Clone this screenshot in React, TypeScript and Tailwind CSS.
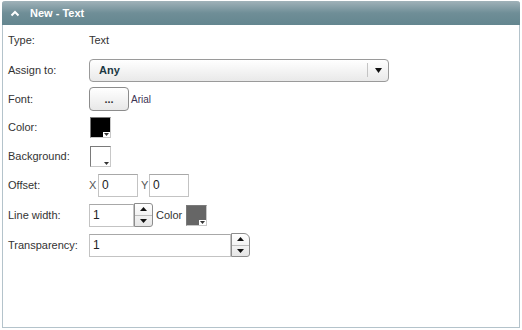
import React from "react";

const Label = ({ children }: { children: React.ReactNode }) => (
  <div className="w-[86px] shrink-0 pl-[5px] text-[11px] text-[#333]">{children}</div>
);

const Row = ({ h, label, children }: { h: string; label: string; children?: React.ReactNode }) => (
  <div className={`flex items-center ${h}`}>
    <Label>{label}</Label>
    {children}
  </div>
);

const Swatch = ({ color }: { color: string }) => (
  <div className="relative h-[21px] w-[21px] border border-t-[#7a7a7a] border-l-[#7a7a7a] border-r-[#c8c8c8] border-b-[#c8c8c8]" style={{ background: color }}>
    <div className="absolute right-0 bottom-0 flex h-[5px] w-[7px] items-center justify-center bg-white">
      <svg width="5" height="3" viewBox="0 0 5 3">
        <path d="M0 0h5L2.5 3z" fill="#333" />
      </svg>
    </div>
  </div>
);

const Spinner = ({ big }: { big?: boolean }) => (
  <div
    className={`flex h-[24px] w-[19px] flex-col border border-[#8d8d8d] bg-gradient-to-b from-white to-[#e6e6e6] ${
      big ? "rounded-tr-[6px] rounded-br-[3px]" : "rounded-r-[3px]"
    }`}
  >
    <div className="flex flex-1 items-center justify-center border-b border-[#bdbdbd]">
      <svg width="7" height="4" viewBox="0 0 7 4">
        <path d="M0 4h7L3.5 0z" fill="#111" />
      </svg>
    </div>
    <div className="flex flex-1 items-center justify-center">
      <svg width="7" height="4" viewBox="0 0 7 4">
        <path d="M0 0h7L3.5 4z" fill="#111" />
      </svg>
    </div>
  </div>
);

const Input = ({ w, value }: { w: string; value: string }) => (
  <div className={`flex h-[23px] ${w} items-center border border-[#c3c3c3] border-t-[#a8a8a8] bg-white pl-[3px] text-[12px] text-[#222]`}>
    {value}
  </div>
);

export default function App() {
  return (
    <div className="h-[330px] w-[522px] bg-white pt-[1px] pl-[2px] font-['Liberation_Sans',Arial,sans-serif]">
      <div className="flex h-[327px] w-[518px] flex-col rounded-t-[3px] border border-t-0 border-[#b4c3cb]">
        <div className="-mx-[1px] flex h-[24px] items-center gap-[10px] rounded-t-[3px] bg-gradient-to-b from-[#a0b2b9] via-[#6f8e97] to-[#64868f] pl-[8px]">
          <svg width="10" height="7" viewBox="0 0 10 7">
            <path d="M1.5 5.5L5 2l3.5 3.5" stroke="#fff" strokeWidth="2" fill="none" />
          </svg>
          <span className="text-[11px] font-bold text-white">New - Text</span>
        </div>

        <div className="flex flex-col pt-[1px]">
          <Row h="h-[29px]" label="Type:">
            <span className="text-[11px] text-[#333]">Text</span>
          </Row>
          <Row h="h-[30px]" label="Assign to:">
            <div className="flex h-[23px] w-[300px] items-center rounded-[4px] border border-[#9a9a9a] bg-gradient-to-b from-white to-[#e9e9e9]">
              <span className="flex-1 pl-[9px] text-[11px] font-bold text-[#1c3944]">Any</span>
              <div className="h-[14px] w-px bg-[#c4c4c4]" />
              <div className="flex w-[20px] justify-center">
                <svg width="7" height="5" viewBox="0 0 7 5">
                  <path d="M0 0h7L3.5 5z" fill="#111" />
                </svg>
              </div>
            </div>
          </Row>
          <Row h="h-[28px]" label="Font:">
            <div className="flex h-[24px] w-[40px] items-center justify-center rounded-[4px] border border-[#8c8c8c] bg-gradient-to-b from-white to-[#e8e8e8] text-[11px] font-bold leading-none text-[#333]">
              ...
            </div>
            <span className="ml-[2px] text-[10px] text-[#3b3352]">Arial</span>
          </Row>
          <Row h="h-[29px]" label="Color:">
            <div className="pl-[1px]">
              <Swatch color="#000" />
            </div>
          </Row>
          <Row h="h-[28px]" label="Background:">
            <div className="pl-[1px]">
              <Swatch color="#fff" />
            </div>
          </Row>
          <Row h="h-[30px]" label="Offset:">
            <span className="w-[9px] text-[11px] text-[#555]">X</span>
            <Input w="w-[40px]" value="0" />
            <span className="w-[11px] pl-[3px] text-[11px] text-[#555]">Y</span>
            <Input w="w-[40px]" value="0" />
          </Row>
          <Row h="h-[30px]" label="Line width:">
            <Input w="w-[45px]" value="1" />
            <Spinner />
            <span className="ml-[3px] mr-[4px] text-[11px] text-[#333]">Color</span>
            <Swatch color="#666" />
          </Row>
          <Row h="h-[30px]" label="Transparency:">
            <Input w="w-[142px]" value="1" />
            <Spinner big />
          </Row>
        </div>
      </div>
    </div>
  );
}
